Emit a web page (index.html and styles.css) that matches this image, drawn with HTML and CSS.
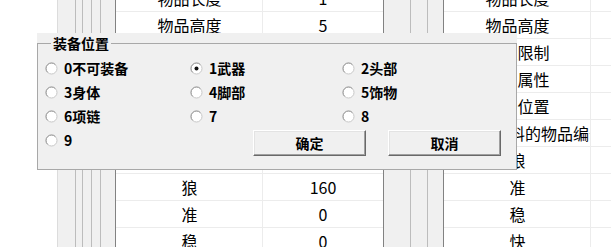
FILE: index.html
```html
<!DOCTYPE html>
<html lang="zh-CN">
<head>
<meta charset="utf-8">
<title>装备位置</title>
<link rel="stylesheet" href="styles.css">
</head>
<body>
<div class="screen">
  <div class="spacer"></div>
  <div class="strip strip-left">
    <div class="seg s18"></div><div class="seg s7"></div><div class="seg s9"></div><div class="seg s9"></div><div class="seg s15"></div>
  </div>
  <div class="tbl tbl-left">
    <div class="row"><div class="cell">物品长度</div><div class="cell">1</div></div>
    <div class="row"><div class="cell">物品高度</div><div class="cell">5</div></div>
    <div class="row"><div class="cell">等级限制</div><div class="cell">0</div></div>
    <div class="row"><div class="cell">附加属性</div><div class="cell">0</div></div>
    <div class="row"><div class="cell">装备位置</div><div class="cell">1</div></div>
    <div class="row"><div class="cell">材料编号</div><div class="cell">0</div></div>
    <div class="row"><div class="cell">攻击</div><div class="cell">10</div></div>
    <div class="row"><div class="cell">狼</div><div class="cell">160</div></div>
    <div class="row"><div class="cell">准</div><div class="cell">0</div></div>
    <div class="row"><div class="cell">稳</div><div class="cell">0</div></div>
  </div>
  <div class="strip strip-right">
    <div class="seg s26"></div><div class="seg s17"></div><div class="seg s16"></div>
  </div>
  <div class="tbl tbl-right">
    <div class="row"><div class="cell">物品长度</div><div class="cell"></div></div>
    <div class="row"><div class="cell">物品高度</div><div class="cell"></div></div>
    <div class="row"><div class="cell">等级限制</div><div class="cell"></div></div>
    <div class="row"><div class="cell">附加属性</div><div class="cell"></div></div>
    <div class="row"><div class="cell">装备位置</div><div class="cell"></div></div>
    <div class="row"><div class="cell">打造原材料的物品编号</div><div class="cell"></div></div>
    <div class="row"><div class="cell">狼</div><div class="cell"></div></div>
    <div class="row"><div class="cell">准</div><div class="cell"></div></div>
    <div class="row"><div class="cell">稳</div><div class="cell"></div></div>
    <div class="row"><div class="cell">快</div><div class="cell"></div></div>
  </div>

  <div class="dialog">
    <fieldset class="group">
      <legend class="group-title">装备位置</legend>
      <div class="radios">
        <label class="radio"><svg class="rb" width="13" height="13" viewBox="0 0 13 13"><circle cx="6.5" cy="6.5" r="5.5" fill="#fff" stroke="#c8c8c8"/><path d="M2.6 10.4A5.5 5.5 0 0 1 10.4 2.6" fill="none" stroke="#9a9a9a"/></svg>0不可装备</label>
        <label class="radio"><svg class="rb" width="13" height="13" viewBox="0 0 13 13"><circle cx="6.5" cy="6.5" r="5.5" fill="#fff" stroke="#c8c8c8"/><path d="M2.6 10.4A5.5 5.5 0 0 1 10.4 2.6" fill="none" stroke="#9a9a9a"/><circle cx="6.5" cy="6.5" r="2" fill="#111"/></svg>1武器</label>
        <label class="radio"><svg class="rb" width="13" height="13" viewBox="0 0 13 13"><circle cx="6.5" cy="6.5" r="5.5" fill="#fff" stroke="#c8c8c8"/><path d="M2.6 10.4A5.5 5.5 0 0 1 10.4 2.6" fill="none" stroke="#9a9a9a"/></svg>2头部</label>
        <label class="radio"><svg class="rb" width="13" height="13" viewBox="0 0 13 13"><circle cx="6.5" cy="6.5" r="5.5" fill="#fff" stroke="#c8c8c8"/><path d="M2.6 10.4A5.5 5.5 0 0 1 10.4 2.6" fill="none" stroke="#9a9a9a"/></svg>3身体</label>
        <label class="radio"><svg class="rb" width="13" height="13" viewBox="0 0 13 13"><circle cx="6.5" cy="6.5" r="5.5" fill="#fff" stroke="#c8c8c8"/><path d="M2.6 10.4A5.5 5.5 0 0 1 10.4 2.6" fill="none" stroke="#9a9a9a"/></svg>4脚部</label>
        <label class="radio"><svg class="rb" width="13" height="13" viewBox="0 0 13 13"><circle cx="6.5" cy="6.5" r="5.5" fill="#fff" stroke="#c8c8c8"/><path d="M2.6 10.4A5.5 5.5 0 0 1 10.4 2.6" fill="none" stroke="#9a9a9a"/></svg>5饰物</label>
        <label class="radio"><svg class="rb" width="13" height="13" viewBox="0 0 13 13"><circle cx="6.5" cy="6.5" r="5.5" fill="#fff" stroke="#c8c8c8"/><path d="M2.6 10.4A5.5 5.5 0 0 1 10.4 2.6" fill="none" stroke="#9a9a9a"/></svg>6项链</label>
        <label class="radio"><svg class="rb" width="13" height="13" viewBox="0 0 13 13"><circle cx="6.5" cy="6.5" r="5.5" fill="#fff" stroke="#c8c8c8"/><path d="M2.6 10.4A5.5 5.5 0 0 1 10.4 2.6" fill="none" stroke="#9a9a9a"/></svg>7</label>
        <label class="radio"><svg class="rb" width="13" height="13" viewBox="0 0 13 13"><circle cx="6.5" cy="6.5" r="5.5" fill="#fff" stroke="#c8c8c8"/><path d="M2.6 10.4A5.5 5.5 0 0 1 10.4 2.6" fill="none" stroke="#9a9a9a"/></svg>8</label>
      </div>
      <div class="last-row">
        <label class="radio"><svg class="rb" width="13" height="13" viewBox="0 0 13 13"><circle cx="6.5" cy="6.5" r="5.5" fill="#fff" stroke="#c8c8c8"/><path d="M2.6 10.4A5.5 5.5 0 0 1 10.4 2.6" fill="none" stroke="#9a9a9a"/></svg>9</label>
        <div class="buttons">
          <button class="btn">确定</button>
          <button class="btn">取消</button>
        </div>
      </div>
    </fieldset>
  </div>
</div>
</body>
</html>
```

FILE: styles.css
```css
* { box-sizing: border-box; }
html, body {
  margin: 0;
  padding: 0;
  background: #fff;
  overflow: hidden;
}
body {
  font-family: "Noto Sans CJK SC", "Noto Sans", sans-serif;
  color: #000;
}
.screen {
  position: relative;
  display: flex;
  width: 611px;
  height: 247px;
  overflow: hidden;
}
.spacer { width: 57px; flex: none; }
.strip {
  display: flex;
  flex: none;
  height: 247px;
  background: #f0f0f0;
}
.strip-left { width: 58px; }
.strip-right { width: 59px; }
.seg { flex: none; height: 100%; border-left: 1px solid #bcbcbc; }
.strip-left .seg:first-child { border-left-color: #dcdcdc; }
.strip-right .seg:first-child { border-left: none; }
.s18 { width: 18px; }
.s7 { width: 7px; }
.s9 { width: 9px; }
.s15 { width: 15px; }
.s26 { width: 26px; }
.s17 { width: 17px; }
.s16 { width: 16px; }

.tbl {
  flex: none;
  margin-top: -15px;
  display: flex;
  flex-direction: column;
  font-size: 16px;
}
.tbl-left {
  width: 269px;
  border-left: 1px solid #828282;
  border-right: 1px solid #828282;
}
.tbl-right {
  flex: 1;
  border-left: 1px solid #828282;
}
.row {
  display: grid;
  grid-template-columns: 147px 1fr;
  height: 27px;
  border-bottom: 1px solid #ececec;
}
.cell {
  line-height: 26px;
  text-align: center;
  white-space: nowrap;
  overflow: hidden;
}
.cell:first-child { border-right: 1px solid #ececec; padding-left: 1px; }

.dialog {
  position: absolute;
  left: 37px;
  top: 33px;
  width: 480px;
  height: 137px;
  background: #f0f0f0;
  display: flex;
}
.group {
  flex: 1;
  margin: 0;
  padding: 3px 0 0 7px;
  min-width: 0;
  border: 1px solid #a8a8a8;
  font-size: 14px;
  font-weight: 700;
}
.group-title {
  margin-left: 6px;
  padding: 0 2px;
  line-height: 20px;
  font-size: 14px;
}
.radios {
  display: grid;
  grid-template-columns: 145px 152px 1fr;
  grid-auto-rows: 24px;
}
.radio {
  display: flex;
  align-items: center;
  gap: 6px;
  line-height: 24px;
  height: 24px;
  white-space: nowrap;
}
.rb { flex: none; }
.last-row {
  display: flex;
  align-items: flex-start;
}
.last-row .radio { width: 208px; }
.buttons {
  display: flex;
  gap: 22px;
  margin-top: 2px;
}
.btn {
  width: 113px;
  height: 26px;
  padding: 0;
  font-family: inherit;
  font-size: 14px;
  font-weight: 700;
  color: #000;
  background: #f0f0f0;
  border: 1px solid;
  border-color: #fff #696969 #696969 #fff;
  box-shadow: inset -1px -1px 0 #a0a0a0, inset 1px 1px 0 #e3e3e3;
}
```
